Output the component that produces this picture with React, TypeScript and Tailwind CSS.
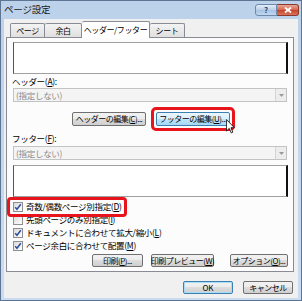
import type { ReactNode } from "react"

const btn =
  "flex items-center justify-center whitespace-nowrap rounded-[2px] border border-[#707070] bg-[linear-gradient(#f2f2f2,#ebebeb_50%,#dddddd_50%,#cfcfcf)] text-[8px] leading-none tracking-[-0.5px] text-black"

function K({ children }: { children: ReactNode }) {
  return <span className="underline">{children}</span>
}

function Check({ checked }: { checked?: boolean }) {
  return (
    <span className="flex h-[10px] w-[10px] shrink-0 items-center justify-center border border-[#8e8f8f] bg-[linear-gradient(135deg,#dadada,#ffffff)]">
      {checked && (
        <svg width="8" height="8" viewBox="0 0 8 8">
          <path d="M1.2 4.2 L3 6.3 L6.8 1.3" fill="none" stroke="#2d4d9c" strokeWidth="1.5" />
        </svg>
      )}
    </span>
  )
}

function Dropdown() {
  return (
    <div className="ml-[6px] flex h-[14px] w-[274px] items-center border border-[#c3c3c3] bg-[#f4f4f4]">
      <span className="flex-1 whitespace-nowrap pl-[2px] text-[8.5px] leading-none tracking-[-0.3px] text-[#8a8a8a]">(指定しない)</span>
      <span className="flex h-full w-[11px] items-center justify-center border-l border-[#d4d4d4] bg-[#ededed]">
        <svg width="5" height="3" viewBox="0 0 5 3">
          <path d="M0 0 L5 0 L2.5 3 Z" fill="#9a9a9a" />
        </svg>
      </span>
    </div>
  )
}

function Preview() {
  return (
    <div className="ml-[6px] h-[32px] w-[275px] border-t border-b border-l border-r-2 border-t-[#a0a0a0] border-b-[#a0a0a0] border-l-[#555555] border-r-[#111111] bg-white" />
  )
}

function Row({ checked, children }: { checked?: boolean; children: ReactNode }) {
  return (
    <div className="flex h-[13px] items-center gap-[3px] whitespace-nowrap pl-[6px] text-[8.5px] leading-none tracking-[-0.3px] text-black">
      <Check checked={checked} />
      <span>{children}</span>
    </div>
  )
}

export default function App() {
  return (
    <div className="relative flex h-[301px] w-[302px] flex-col overflow-hidden border border-[#5d7493] bg-[linear-gradient(#bcd2ea,#c9dcf0)] font-['Noto_Sans_CJK_JP','Noto_Sans',sans-serif]">
      {/* Title bar */}
      <div className="flex h-[18px] items-start pl-[3px]">
        <span className="mt-[2px] flex-1 whitespace-nowrap text-[9.5px] leading-[12px] tracking-[-0.2px] text-[#1a1a1a]">ページ設定</span>
        <div className="mt-[3px] mr-[2px] flex">
          <span className="flex h-[12px] w-[22px] items-center justify-center rounded-l-[3px] border border-[#6d89ad] bg-[linear-gradient(#e3edf8,#b9cfe8_50%,#a7c2e2_50%,#c3d7ee)] text-[8px] font-bold leading-none text-[#2f4a6e]">
            ?
          </span>
          <span className="flex h-[12px] w-[22px] items-center justify-center rounded-r-[3px] border border-l-0 border-[#8a3a2c] bg-[linear-gradient(#eaa898,#d5644c_50%,#c5422a_50%,#d97659)]">
            <svg width="8" height="6" viewBox="0 0 8 6">
              <path d="M1 0.5 L7 5.5 M7 0.5 L1 5.5" stroke="#ffffff" strokeWidth="1.8" />
            </svg>
          </span>
        </div>
      </div>

      {/* Client area */}
      <div className="mx-[3px] mb-[2px] flex flex-1 flex-col bg-[#f0f0f0]">
        {/* Tabs */}
        <div className="relative z-10 mt-[2px] flex h-[16px] items-end whitespace-nowrap pl-[6px] text-[8px] leading-none tracking-[-0.4px] text-black">
          <span className="flex h-[14px] w-[35px] items-center justify-center rounded-t-[2px] border border-b-0 border-[#898c95] bg-[linear-gradient(#f3f3f3,#e0e0e0)]">
            ページ
          </span>
          <span className="flex h-[14px] w-[37px] items-center justify-center rounded-t-[2px] border border-b-0 border-l-0 border-[#898c95] bg-[linear-gradient(#f3f3f3,#e0e0e0)]">
            余白
          </span>
          <span className="-mb-px flex h-[17px] w-[68px] items-center justify-center rounded-t-[2px] border border-b-0 border-l-0 border-[#898c95] bg-white">
            ヘッダー/フッター
          </span>
          <span className="flex h-[14px] w-[35px] items-center justify-center rounded-t-[2px] border border-b-0 border-l-0 border-[#898c95] bg-[linear-gradient(#f3f3f3,#e0e0e0)]">
            シート
          </span>
        </div>

        {/* Panel */}
        <div className="mr-[4px] ml-[2px] flex h-[235px] flex-col border border-[#898c95] bg-[#fcfcfc]">
          <div className="mt-[4px]">
            <Preview />
          </div>
          <div className="mt-[2px] ml-[5px] h-[10px] whitespace-nowrap text-[8.5px] leading-[10px] tracking-[-0.3px] text-black">
            ヘッダー(<K>A</K>):
          </div>
          <div className="mt-[2px]">
            <Dropdown />
          </div>
          <div className="mt-[10px] flex gap-[10px] pl-[65px]">
            <span className={`${btn} h-[14px] w-[74px]`}>
              ヘッダーの編集(<K>C</K>)...
            </span>
            <span className="flex h-[14px] w-[74px] items-center justify-center whitespace-nowrap rounded-[2px] border border-[#3c7fb1] bg-[linear-gradient(#eaf6fd,#d9f0fc_50%,#bee6fd_50%,#a7d9f5)] text-[8px] leading-none tracking-[-0.5px] text-black">
              フッターの編集(<K>U</K>)...
            </span>
          </div>
          <div className="mt-[7px] ml-[5px] h-[10px] whitespace-nowrap text-[8.5px] leading-[10px] tracking-[-0.3px] text-black">
            フッター(<K>F</K>):
          </div>
          <div className="mt-[3px]">
            <Dropdown />
          </div>
          <div className="mt-[5px]">
            <Preview />
          </div>
          <div className="mt-[3px] flex flex-col">
            <Row checked>
              奇数/偶数ページ別指定(<K>D</K>)
            </Row>
            <Row>
              先頭ページのみ別指定(<K>I</K>)
            </Row>
            <Row checked>
              ドキュメントに合わせて拡大/縮小(<K>L</K>)
            </Row>
            <Row checked>
              ページ余白に合わせて配置(<K>M</K>)
            </Row>
          </div>
          <div className="mt-[2px] flex justify-end pr-[5px]">
            <span className={`${btn} h-[13px] w-[51px]`}>
              印刷(<K>P</K>)...
            </span>
            <span className={`${btn} ml-[8px] h-[13px] w-[63px]`}>
              印刷プレビュー(<K>W</K>)
            </span>
            <span className={`${btn} ml-[16px] h-[13px] w-[58px]`}>
              オプション(<K>O</K>)...
            </span>
          </div>
        </div>

        {/* Dialog buttons */}
        <div className="mt-[9px] flex justify-end gap-[10px] pr-[5px]">
          <span className="flex h-[13px] w-[50px] items-center justify-center rounded-[2px] border border-[#3c7fb1] bg-[linear-gradient(#f2f2f2,#ebebeb_50%,#dddddd_50%,#cfcfcf)] text-[8px] leading-none text-black shadow-[inset_0_0_0_1px_#a9dcf6]">
            OK
          </span>
          <span className={`${btn} h-[13px] w-[50px]`}>キャンセル</span>
        </div>
      </div>

      {/* Red callouts */}
      <div className="absolute top-[106px] left-[150px] h-[24px] w-[84px] rounded-[5px] border-[3px] border-[#e8141c]" />
      <div className="absolute top-[196px] left-[6px] h-[20px] w-[120px] rounded-[4px] border-[3px] border-[#e8141c]" />

      {/* Mouse cursor */}
      <svg className="absolute top-[118px] left-[225px]" width="9" height="15" viewBox="0 0 11 18">
        <path d="M0.5 0.5 L0.5 14.5 L4 11.3 L6.4 16.8 L8.4 15.9 L6.1 10.5 L10.3 10.5 Z" fill="#ffffff" stroke="#000000" strokeWidth="1" />
      </svg>
    </div>
  )
}
